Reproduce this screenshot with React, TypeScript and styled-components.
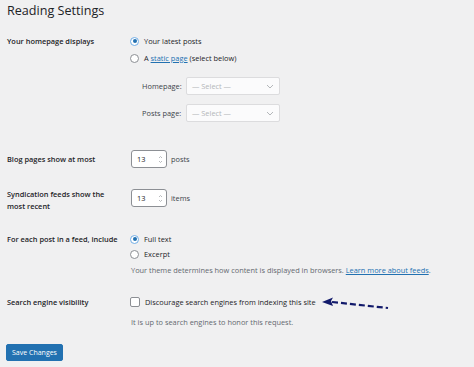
import React from "react";
import styled, { createGlobalStyle } from "styled-components";

const Global = createGlobalStyle`
  html, body { margin: 0; padding: 0; background: #f0f0f1; }
  body { font-family: "Open Sans", "Noto Sans", sans-serif; color: #1d2327; font-size: 7.4px; }
  * { box-sizing: border-box; }
`;

const Page = styled.div`
  width: 474px;
  height: 367px;
  padding: 0 7px;
  overflow: hidden;
`;

const Title = styled.h1`
  margin: 0;
  padding-top: 2px;
  font-size: 12.6px;
  line-height: 18px;
  font-weight: 400;
  color: #1d2327;
`;

const Row = styled.div<{ $top: number }>`
  display: grid;
  grid-template-columns: 124px 1fr;
  align-items: start;
  padding-top: ${(p) => p.$top}px;
`;

const Label = styled.div<{ $center?: boolean }>`
  font-weight: 600;
  font-size: 7.4px;
  line-height: 12px;
  padding-right: 4px;
  white-space: nowrap;
  align-self: ${(p) => (p.$center ? "center" : "start")};
`;

const Field = styled.div`
  display: flex;
  flex-direction: column;
`;

const Choice = styled.label<{ $gap: number }>`
  display: flex;
  align-items: center;
  gap: 5px;
  height: 12px;
  line-height: 12px;
  margin-bottom: ${(p) => p.$gap}px;
  white-space: nowrap;
`;

const Radio = styled.span<{ $on?: boolean }>`
  flex: none;
  width: 9px;
  height: 9px;
  border-radius: 50%;
  background: #fff;
  border: 1px solid ${(p) => (p.$on ? "#72aee6" : "#8c8f94")};
  display: flex;
  align-items: center;
  justify-content: center;
  margin-left: -1px;
  &::after {
    content: "";
    width: 4px;
    height: 4px;
    border-radius: 50%;
    background: ${(p) => (p.$on ? "#2271b1" : "transparent")};
  }
`;

const Box = styled.span`
  flex: none;
  width: 10px;
  height: 10px;
  border-radius: 2px;
  background: #fff;
  border: 1px solid #8c8f94;
  margin-left: -1px;
`;

const Link = styled.a`
  color: #2271b1;
  text-decoration: underline;
`;

const SelectRow = styled.div<{ $top: number }>`
  display: flex;
  align-items: center;
  margin-left: 11px;
  margin-top: ${(p) => p.$top}px;
  gap: 2px;
`;

const SelectLabel = styled.span`
  width: 42px;
  color: #3c434a;
  white-space: nowrap;
`;

const Select = styled.div`
  width: 94px;
  height: 18px;
  border: 1px solid #dcdcde;
  border-radius: 2px;
  background: #fbfbfc;
  color: #b4b7ba;
  display: flex;
  align-items: center;
  justify-content: space-between;
  padding: 0 5px 0 5px;
`;

const NumberLine = styled.div<{ $top?: number }>`
  display: flex;
  align-items: center;
  gap: 4px;
  margin-top: ${(p) => p.$top ?? 0}px;
`;

const NumberInput = styled.div`
  width: 36px;
  height: 18px;
  border: 1px solid #8c8f94;
  border-radius: 3px;
  background: #fff;
  display: flex;
  align-items: center;
  justify-content: space-between;
  padding: 0 3px 0 5px;
`;

const Unit = styled.span`
  color: #3c434a;
`;

const Desc = styled.p<{ $top: number }>`
  margin: ${(p) => p.$top}px 0 0;
  color: #646970;
  line-height: 12px;
  white-space: nowrap;
`;

const Save = styled.button`
  margin-top: 16px;
  width: 57px;
  height: 17px;
  margin-left: -1px;
  border: 1px solid #2271b1;
  border-radius: 2px;
  background: #2271b1;
  color: #fff;
  font-family: inherit;
  font-size: 7px;
  padding: 0;
  display: flex;
  align-items: center;
  justify-content: center;
`;

const Arrow = styled.svg`
  margin-left: 0px;
  margin-top: 4px;
  flex: none;
`;

const Chevron = () => (
  <svg width="8" height="5" viewBox="0 0 8 5">
    <path d="M1 1 L4 4 L7 1" fill="none" stroke="#b4b7ba" strokeWidth="1" />
  </svg>
);

const Spinner = () => (
  <svg width="5" height="9" viewBox="0 0 5 9">
    <path d="M1 3 L2.5 1.5 L4 3" fill="none" stroke="#a7aaad" strokeWidth="0.8" />
    <path d="M1 6 L2.5 7.5 L4 6" fill="none" stroke="#a7aaad" strokeWidth="0.8" />
  </svg>
);

export default function App() {
  return (
    <Page>
      <Global />
      <Title>Reading Settings</Title>

      <Row $top={15}>
        <Label>Your homepage displays</Label>
        <Field>
          <Choice $gap={5}>
            <Radio $on />
            <span>Your latest posts</span>
          </Choice>
          <Choice $gap={0}>
            <Radio />
            <span>
              A <Link>static page</Link> (select below)
            </span>
          </Choice>
          <SelectRow $top={13}>
            <SelectLabel>Homepage:</SelectLabel>
            <Select>
              <span>— Select —</span>
              <Chevron />
            </Select>
          </SelectRow>
          <SelectRow $top={9}>
            <SelectLabel>Posts page:</SelectLabel>
            <Select>
              <span>— Select —</span>
              <Chevron />
            </Select>
          </SelectRow>
        </Field>
      </Row>

      <Row $top={28}>
        <Label $center>Blog pages show at most</Label>
        <NumberLine>
          <NumberInput>
            <span>13</span>
            <Spinner />
          </NumberInput>
          <Unit>posts</Unit>
        </NumberLine>
      </Row>

      <Row $top={20}>
        <Label>
          Syndication feeds show the
          <br />
          most recent
        </Label>
        <NumberLine $top={1}>
          <NumberInput>
            <span>13</span>
            <Spinner />
          </NumberInput>
          <Unit>items</Unit>
        </NumberLine>
      </Row>

      <Row $top={21}>
        <Label>For each post in a feed, include</Label>
        <Field>
          <Choice $gap={3}>
            <Radio $on />
            <span>Full text</span>
          </Choice>
          <Choice $gap={0}>
            <Radio />
            <span>Excerpt</span>
          </Choice>
          <Desc $top={4}>
            Your theme determines how content is displayed in browsers.{" "}
            <Link>Learn more about feeds</Link>.
          </Desc>
        </Field>
      </Row>

      <Row $top={20}>
        <Label>Search engine visibility</Label>
        <Field>
          <Choice $gap={0}>
            <Box />
            <span>Discourage search engines from indexing this site</span>
            <Arrow width="70" height="14" viewBox="0 0 70 14">
              <path d="M1 5 L12 0.5 L10 4 L12 9 Z" fill="#121a6b" />
              <path
                d="M11 5 L67 11"
                stroke="#121a6b"
                strokeWidth="2.2"
                strokeDasharray="6 3"
                fill="none"
              />
            </Arrow>
          </Choice>
          <Desc $top={8}>It is up to search engines to honor this request.</Desc>
        </Field>
      </Row>

      <Save>Save Changes</Save>
    </Page>
  );
}
